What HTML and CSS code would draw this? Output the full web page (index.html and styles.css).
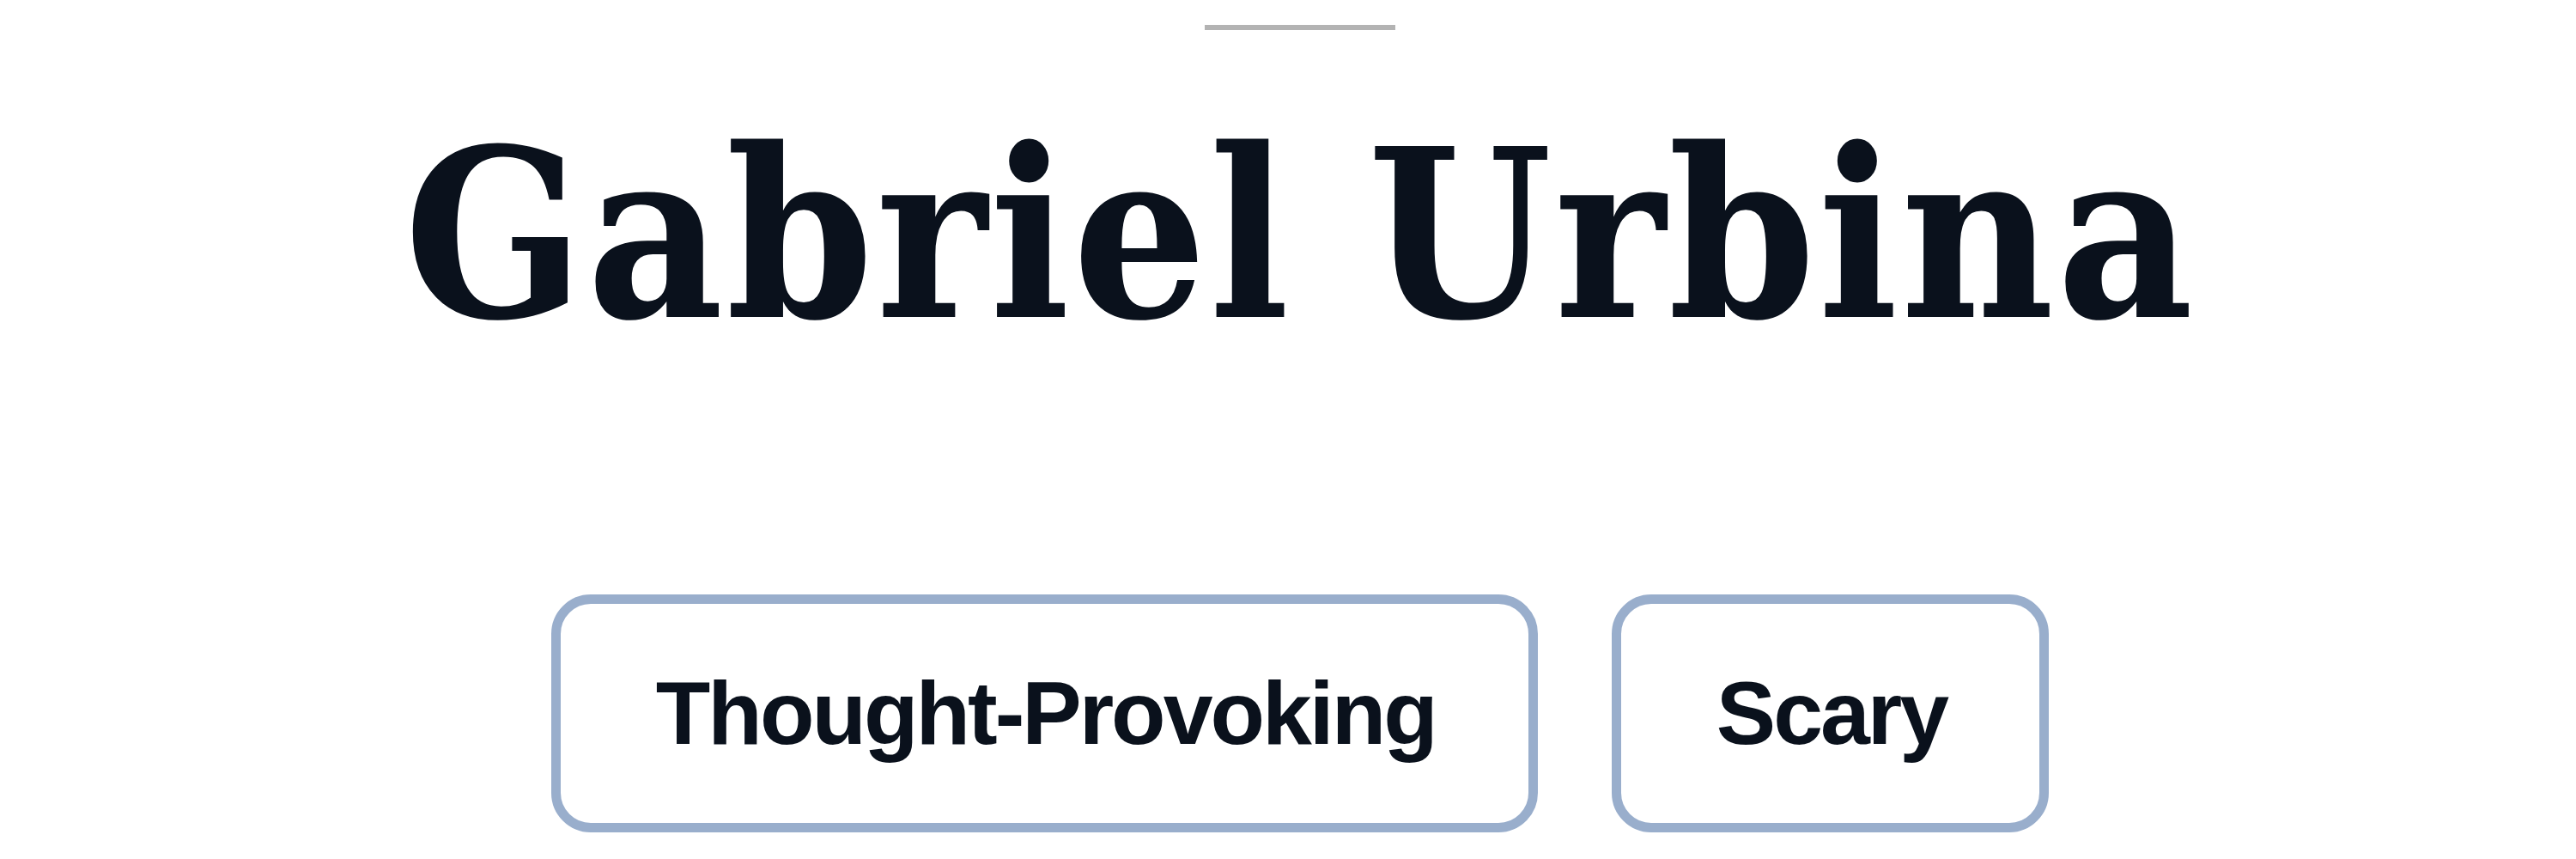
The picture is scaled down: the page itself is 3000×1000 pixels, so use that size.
FILE: index.html
```html
<!DOCTYPE html>
<html>
<head>
<meta charset="utf-8">
<link rel="stylesheet" href="styles.css">
</head>
<body>
<main class="page">
  <div class="rule"></div>
  <h1 class="title">Gabriel Urbina</h1>
  <div class="tags">
    <span class="tag">Thought-Provoking</span>
    <span class="tag">Scary</span>
  </div>
</main>
</body>
</html>
```
FILE: styles.css
```css
html, body {
  margin: 0;
  padding: 0;
  background: #ffffff;
}
.page {
  width: 3000px;
  height: 1000px;
  box-sizing: border-box;
  padding-left: 28px;
  padding-top: 29px;
  display: flex;
  flex-direction: column;
  align-items: center;
  overflow: hidden;
}
.rule {
  width: 222px;
  height: 6px;
  background: #b3b3b3;
}
.title {
  margin: 0;
  margin-top: 102px;
  font-family: "DejaVu Serif Condensed", "DejaVu Serif", serif;
  font-weight: bold;
  font-size: 273px;
  letter-spacing: 3px;
  line-height: 1;
  color: #0a111c;
  white-space: nowrap;
}
.tags {
  margin-top: 282px;
  display: flex;
  gap: 86px;
}
.tag {
  display: flex;
  align-items: center;
  height: 277px;
  box-sizing: border-box;
  padding: 0 108px 0 111px;
  border: 11px solid #99aecc;
  border-radius: 46px;
  font-family: "Liberation Sans", Arial, sans-serif;
  font-weight: bold;
  font-size: 104px;
  letter-spacing: -3px;
  color: #0a111c;
}
```
